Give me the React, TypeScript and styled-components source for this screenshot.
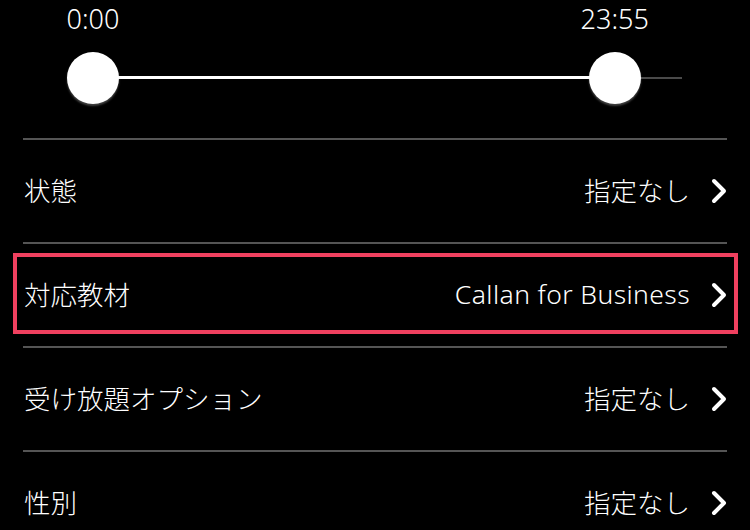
import * as React from 'react';
import styled, { createGlobalStyle } from 'styled-components';

const GlobalStyle = createGlobalStyle`
  html, body {
    margin: 0;
    padding: 0;
    background: #000;
    overflow: hidden;
  }
  body {
    font-family: "Noto Sans", "Noto Sans CJK JP", sans-serif;
    color: #fff;
  }
`;

const Page = styled.div`
  width: 750px;
  height: 530px;
  background: #000;
  overflow: hidden;
`;

const SliderSection = styled.div`
  height: 138px;
  margin-left: 93px;
  width: 589px;
  padding-top: 76px;
  box-sizing: border-box;
`;

const Track = styled.div`
  position: relative;
  height: 3px;
  background: linear-gradient(#000 0 1px, #4a4a4a 1px 3px);
`;

const Fill = styled.div`
  position: absolute;
  top: 0;
  height: 3px;
  background: #fff;
`;

const Handle = styled.div`
  position: absolute;
  top: 1.5px;
  transform: translate(-50%, -50%);
`;

const Thumb = styled.div`
  width: 52px;
  height: 52px;
  border-radius: 50%;
  background: #fff;
  box-shadow: 0 2px 2px rgba(190, 190, 190, 0.35);
`;

const TimeLabel = styled.span`
  position: absolute;
  left: 50%;
  bottom: 100%;
  margin-bottom: 15px;
  transform: translateX(-50%);
  font-size: 27px;
  font-weight: 300;
  line-height: 36px;
  white-space: nowrap;
`;

const List = styled.div`
  margin: 0 23px;
`;

const Row = styled.div<{ $highlight?: boolean }>`
  position: relative;
  display: flex;
  align-items: center;
  justify-content: space-between;
  height: 104px;
  padding: 0 0 3px 1px;
  box-sizing: border-box;
  border-top: 2px solid #555;

  ${({ $highlight }) =>
    $highlight &&
    `
    &::after {
      content: "";
      position: absolute;
      top: 9px;
      bottom: 12px;
      left: -10px;
      right: -11px;
      border: 4px solid #f0405f;
      pointer-events: none;
    }
  `}
`;

const Label = styled.span`
  font-family: "Noto Sans CJK JP", sans-serif;
  font-size: 26.5px;
  font-weight: 300;
`;

const Value = styled.span<{ $latin?: boolean }>`
  display: flex;
  align-items: center;
  gap: 21px;
  font-size: 26.5px;
  font-weight: 300;
  font-family: "Noto Sans", "Noto Sans CJK JP", sans-serif;
  letter-spacing: ${({ $latin }) => ($latin ? '0.4px' : '0')};

  svg {
    margin-top: 3px;
  }
`;

const Chevron = () => (
  <svg width="16" height="26" viewBox="0 0 16 26">
    <polyline
      points="3,3 13,13 3,23"
      fill="none"
      stroke="#fff"
      strokeWidth="4"
      strokeLinecap="round"
      strokeLinejoin="round"
    />
  </svg>
);

const MAX_MINUTES = 27 * 60;

const fmt = (m: number) => `${Math.floor(m / 60)}:${String(m % 60).padStart(2, '0')}`;

const TimeRange = ({ from, to }: { from: number; to: number }) => {
  const a = (from / MAX_MINUTES) * 100;
  const b = (to / MAX_MINUTES) * 100;
  return (
    <SliderSection>
      <Track>
        <Fill style={{ left: `${a}%`, width: `${b - a}%` }} />
        <Handle style={{ left: `${a}%` }}>
          <TimeLabel>{fmt(from)}</TimeLabel>
          <Thumb />
        </Handle>
        <Handle style={{ left: `${b}%` }}>
          <TimeLabel>{fmt(to)}</TimeLabel>
          <Thumb />
        </Handle>
      </Track>
    </SliderSection>
  );
};

const filters = [
  { label: '状態', value: '指定なし' },
  { label: '対応教材', value: 'Callan for Business', highlight: true },
  { label: '受け放題オプション', value: '指定なし' },
  { label: '性別', value: '指定なし' },
];

export default function App() {
  return (
    <Page>
      <GlobalStyle />
      <TimeRange from={0} to={23 * 60 + 55} />
      <List>
        {filters.map(f => (
          <Row key={f.label} $highlight={f.highlight}>
            <Label>{f.label}</Label>
            <Value $latin={/^[\x20-\x7e]+$/.test(f.value)}>
              {f.value}
              <Chevron />
            </Value>
          </Row>
        ))}
      </List>
    </Page>
  );
}
